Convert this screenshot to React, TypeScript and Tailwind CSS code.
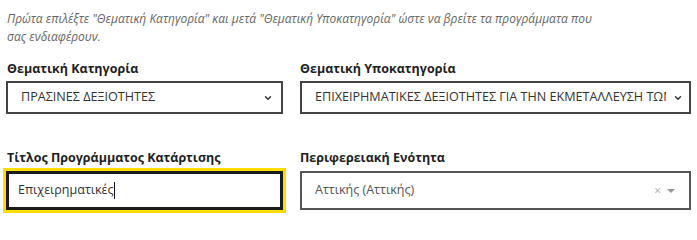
import { ChevronDown } from "lucide-react"

const font = { fontFamily: "'Open Sans', 'Noto Sans', sans-serif" }

const App = () => {
  return (
    <div className="w-[697px] h-[226px] bg-white overflow-hidden pl-[6px] pt-[10px]" style={font}>
      <p className="text-[12px] leading-[18px] italic text-[#666] pl-[1px] whitespace-nowrap">
        Πρώτα επιλέξτε "Θεματική Κατηγορία" και μετά "Θεματική Υποκατηγορία" ώστε να βρείτε τα προγράμματα που
        <br />
        σας ενδιαφέρουν.
      </p>

      <div className="grid grid-cols-[277px_391px] gap-x-[17px] mt-[14px]">
        {/* Row 1 */}
        <div>
          <label className="block text-[12.5px] leading-[18px] font-bold text-[#1e1e1e] pl-[1px]">Θεματική Κατηγορία</label>
          <div className="mt-[3px] h-[33px] border-2 border-[#444] flex items-center pl-[13px] pr-[8px] text-[12.6px] text-[#333]">
            <span className="flex-1 whitespace-nowrap overflow-hidden">ΠΡΑΣΙΝΕΣ ΔΕΞΙΟΤΗΤΕΣ</span>
            <ChevronDown className="w-[10px] h-[10px] text-[#333]" strokeWidth={3.5} />
          </div>
        </div>
        <div>
          <label className="block text-[12.5px] leading-[18px] font-bold text-[#1e1e1e]">Θεματική Υποκατηγορία</label>
          <div className="mt-[3px] h-[33px] border-2 border-[#444] flex items-center pl-[13px] pr-[6px] text-[12.6px] text-[#333]">
            <span className="flex-1 whitespace-nowrap overflow-hidden mr-[7px]">
              ΕΠΙΧΕΙΡΗΜΑΤΙΚΕΣ ΔΕΞΙΟΤΗΤΕΣ ΓΙΑ ΤΗΝ ΕΚΜΕΤΑΛΛΕΥΣΗ ΤΩΝ ΕΥΚΑΙΡΙΩΝ
            </span>
            <ChevronDown className="w-[10px] h-[10px] text-[#333]" strokeWidth={3.5} />
          </div>
        </div>

        {/* Row 2 */}
        <div className="mt-[35px]">
          <label className="block text-[12.5px] leading-[18px] font-bold text-[#1e1e1e] pl-[1px]">
            Τίτλος Προγράμματος Κατάρτισης
          </label>
          <div className="mt-[4px] h-[39px] border-[3px] border-[#1b1b1b] outline-[3px] outline-[#ffdd00] flex items-center pl-[9px] text-[12.5px] text-[#333]">
            <span>Επιχειρηματικές</span>
            <span className="w-px h-[17px] bg-[#111]" />
          </div>
        </div>
        <div className="mt-[35px]">
          <label className="block text-[12.5px] leading-[18px] font-bold text-[#1e1e1e]">Περιφερειακή Ενότητα</label>
          <div className="mt-[4px] h-[39px] border-2 border-[#555] flex items-center pl-[13px] pr-[14px] text-[12.5px] text-[#555]">
            <span className="flex-1">Αττικής (Αττικής)</span>
            <span className="text-[12px] text-[#aaa] mr-[6px]">×</span>
            <span className="w-0 h-0 border-l-[4px] border-r-[4px] border-t-[4px] border-l-transparent border-r-transparent border-t-[#999]" />
          </div>
        </div>
      </div>
    </div>
  )
}

export default App
